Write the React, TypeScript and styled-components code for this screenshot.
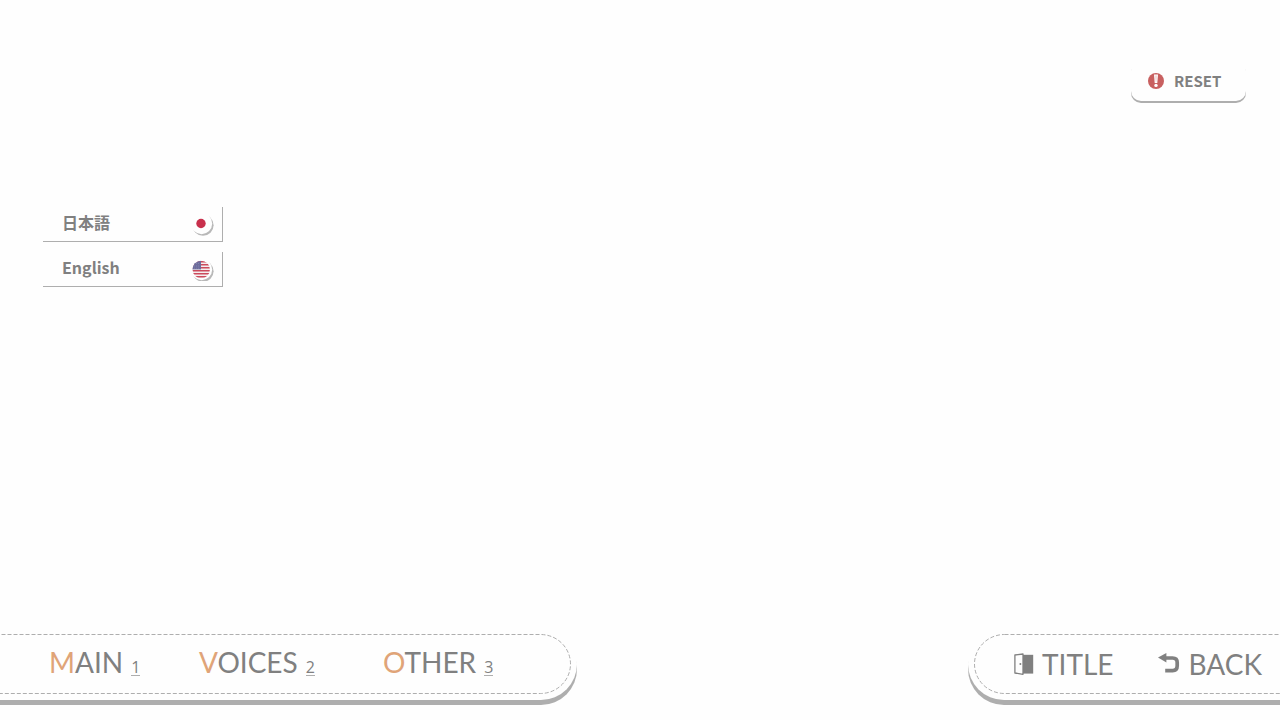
import React from "react";
import styled, { createGlobalStyle } from "styled-components";

const INK = "#808080";
const LINE = "#aeaeae";
const ACCENT = "#e0a478";

type Side = "left" | "right";

const GlobalStyle = createGlobalStyle`
  *, *::before, *::after { box-sizing: border-box; }
  body {
    margin: 0;
    background: #fefefe;
    color: ${INK};
    font-family: "Noto Sans CJK JP", "Noto Sans", sans-serif;
    overflow-x: hidden;
  }
  button {
    margin: 0;
    border: 0;
    background: none;
    color: inherit;
    cursor: pointer;
  }
`;

const Page = styled.div`
  min-height: 100vh;
  display: flex;
  flex-direction: column;
`;

const TopBar = styled.header`
  display: flex;
  justify-content: flex-end;
  padding: 61px 34px 0;
`;

const ResetButton = styled.button`
  display: flex;
  align-items: center;
  gap: 10px;
  width: 115px;
  height: 40px;
  padding: 0 17px;
  border-radius: 10px;
  background: #fefefe;
  box-shadow: 0 2px 0 ${LINE};
  font: 700 15px/20px "Noto Sans CJK JP", "Noto Sans", sans-serif;
`;

const Content = styled.main`
  flex: 1;
  padding: 106px 43px 0;
`;

const LanguageList = styled.div`
  display: flex;
  flex-direction: column;
  gap: 10px;
  width: 180px;
`;

const LanguageButton = styled.button`
  display: flex;
  align-items: center;
  justify-content: space-between;
  height: 35px;
  padding: 0 10px 4px 19px;
  && {
    border-right: 1px solid ${LINE};
    border-bottom: 1px solid ${LINE};
  }
  font: 700 16px/24px "Noto Sans CJK JP", "Noto Sans", sans-serif;
`;

const Flag = styled.svg`
  width: 24px;
  height: 24px;
  margin: 4px -2px 0 0;
`;

const Footer = styled.footer`
  display: flex;
  justify-content: space-between;
  padding-bottom: 20px;
`;

const Pill = styled.nav<{ $side: Side }>`
  position: relative;
  height: 72px;
  padding: ${(p) => (p.$side === "left" ? "6px 6px 6px 0" : "6px 0 6px 6px")};
  border-radius: ${(p) => (p.$side === "left" ? "0 36px 36px 0" : "36px 0 0 36px")};
  background: #fefefe;
  box-shadow: 0 5px 0 ${LINE};
`;

const StitchDrawing = styled.svg<{ $side: Side }>`
  position: absolute;
  top: 6px;
  ${(p) => (p.$side === "left" ? "left: 0;" : "left: 6px;")}
  width: calc(100% - 6px);
  height: 60px;
  pointer-events: none;
`;

const Tabs = styled.div`
  display: grid;
  grid-template-columns: 150px 184px 188px;
  align-items: center;
  height: 60px;
  padding: 0 0 5px 49px;
`;

const Actions = styled.div`
  display: flex;
  align-items: center;
  gap: 45px;
  height: 60px;
  padding: 0 18px 0 39px;
`;

const NavButton = styled.button`
  display: flex;
  align-items: baseline;
  gap: 8px;
  padding: 0;
  font: 400 28px/34px Lato, sans-serif;
`;

const Initial = styled.span`
  color: ${ACCENT};
`;

const Shortcut = styled.span`
  border-bottom: 1px solid ${LINE};
  font: 400 16px/15px "Open Sans", sans-serif;
`;

const ActionButton = styled(NavButton)`
  align-items: center;
`;

const Stitching = ({ side }: { side: Side }) => (
  <StitchDrawing $side={side} aria-hidden="true">
    <rect
      x={side === "left" ? -40.5 : 0.5}
      y="0.5"
      height="59"
      rx="30"
      fill="none"
      stroke={LINE}
      strokeDasharray="4 2"
      style={{ width: "calc(100% + 40px)" }}
    />
  </StitchDrawing>
);

const WarningIcon = () => (
  <svg width="16" height="16" viewBox="0 0 16 16" aria-hidden="true">
    <circle cx="8" cy="8" r="8" fill="#c86060" />
    <path d="M6 1.4h4l-.7 8.6H6.7z" fill="#fff" />
    <path d="M7.4 2.6h1.2l-.3 6.2h-.6z" fill="#ecc0c0" />
    <circle cx="8" cy="12.4" r="1.7" fill="#fff" />
  </svg>
);

const FlagBase = () => (
  <>
    <circle cx="13" cy="13.2" r="10.6" fill="#b8b8b8" />
    <circle cx="11.6" cy="11.6" r="10.6" fill="#fefefe" />
  </>
);

const JapanFlag = () => (
  <Flag viewBox="0 0 24 24" aria-hidden="true">
    <FlagBase />
    <circle cx="11" cy="11.5" r="4.7" fill="#c8304c" />
  </Flag>
);

const UsaFlag = () => (
  <Flag viewBox="0 -1 24 24" aria-hidden="true">
    <defs>
      <clipPath id="usa-disc">
        <circle cx="11.2" cy="11.5" r="8.7" />
      </clipPath>
    </defs>
    <FlagBase />
    <g clipPath="url(#usa-disc)">
      <rect width="24" height="24" fill="#f4eeee" />
      {[3, 6, 9, 12, 15, 18].map((y) => (
        <rect key={y} y={y} width="24" height="1.5" fill="#cc4a5c" />
      ))}
      <rect width="11" height="11.4" fill="#6c6c9c" />
      <path d="M4 5.5h6M4 8h6M4 10.2h6" stroke="#8c8cb0" strokeWidth=".7" strokeDasharray="1 1" />
    </g>
  </Flag>
);

const DoorIcon = () => (
  <svg width="21" height="22" viewBox="0 0 21 22" aria-hidden="true">
    <path d="M9 1.8h11.2v18.8H9z" fill={INK} />
    <path d="M1.9 2 10 1v20.3L1.9 20z" fill="#fefefe" stroke={INK} strokeWidth="1.3" strokeLinejoin="round" />
    <circle cx="7.4" cy="11" r="1" fill={INK} />
  </svg>
);

const ReturnIcon = () => (
  <svg width="22" height="22" viewBox="0 0 22 22" aria-hidden="true">
    <path d="M0 4.6 8.4 0v9.4z" fill={INK} />
    <path d="M6 5h8.6q4.6 0 4.6 4.6v3.2q0 4.8-4.6 4.8H7.2" fill="none" stroke={INK} strokeWidth="3.7" />
  </svg>
);

const tabs = [
  { name: "MAIN", shortcut: "1" },
  { name: "VOICES", shortcut: "2" },
  { name: "OTHER", shortcut: "3" },
];

export default function App() {
  return (
    <Page>
      <GlobalStyle />
      <TopBar>
        <ResetButton type="button">
          <WarningIcon />
          RESET
        </ResetButton>
      </TopBar>
      <Content>
        <LanguageList>
          <LanguageButton type="button" lang="ja">
            日本語
            <JapanFlag />
          </LanguageButton>
          <LanguageButton type="button" lang="en">
            English
            <UsaFlag />
          </LanguageButton>
        </LanguageList>
      </Content>
      <Footer>
        <Pill $side="left" aria-label="Settings pages">
          <Stitching side="left" />
          <Tabs>
            {tabs.map((tab) => (
              <NavButton type="button" key={tab.name}>
                <span>
                  <Initial>{tab.name[0]}</Initial>
                  {tab.name.slice(1)}
                </span>
                <Shortcut>{tab.shortcut}</Shortcut>
              </NavButton>
            ))}
          </Tabs>
        </Pill>
        <Pill $side="right" aria-label="Navigation">
          <Stitching side="right" />
          <Actions>
            <ActionButton type="button">
              <DoorIcon />
              TITLE
            </ActionButton>
            <ActionButton type="button">
              <ReturnIcon />
              BACK
            </ActionButton>
          </Actions>
        </Pill>
      </Footer>
    </Page>
  );
}
